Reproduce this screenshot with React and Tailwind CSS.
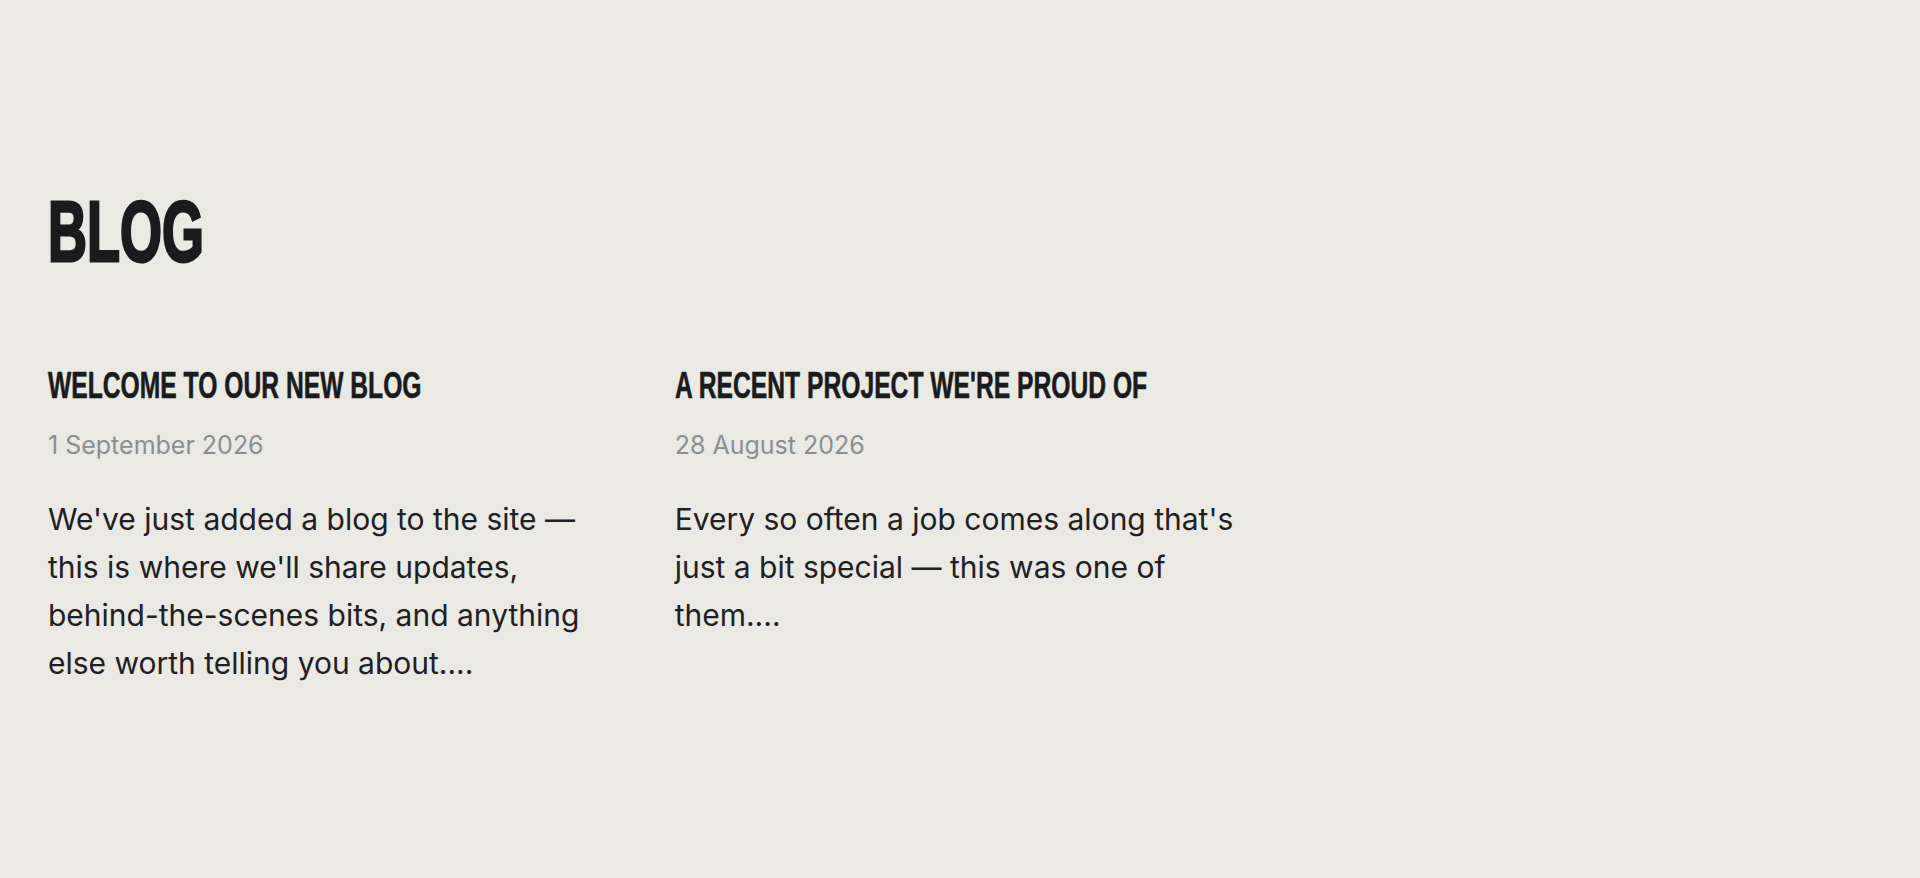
import React from 'react';

const posts = [
  {
    title: "Welcome to our new blog",
    date: '1 September 2026',
    excerpt:
      "We've just added a blog to the site — this is where we'll share updates, behind-the-scenes bits, and anything else worth telling you about....",
  },
  {
    title: "A recent project we're proud of",
    date: '28 August 2026',
    excerpt:
      "Every so often a job comes along that's just a bit special — this was one of them....",
  },
];

const display = "font-['Liberation_Sans_Narrow','Arial_Narrow',sans-serif] font-bold uppercase";

function PostCard({ post }) {
  return (
    <article className="flex flex-col">
      <h2 className={`${display} text-[36px] leading-none text-[#1a1b1d]`}>
        <span className="inline-block origin-left scale-x-[0.685] whitespace-nowrap [-webkit-text-stroke:0.6px_#1a1b1d]">
          {post.title}
        </span>
      </h2>
      <p className="mt-[23px] text-[25px] leading-[36px] text-[#8b8f94]">{post.date}</p>
      <p className="mt-[32px] text-[30px] leading-[48px] text-[#1f2023]">{post.excerpt}</p>
    </article>
  );
}

export default function App() {
  return (
    <div className="min-h-screen bg-[#eae9e4] font-['Inter','Liberation_Sans',sans-serif]">
      <section className="px-12 pt-[189px] pb-24">
        <h1 className={`${display} text-[85px] leading-none text-[#1a1b1d]`}>
          <span className="inline-block origin-left scale-x-[0.635] [-webkit-text-stroke:3px_#1a1b1d]">Blog</span>
        </h1>
        <div className="mt-[94px] grid grid-cols-3 gap-x-14">
          {posts.map((post) => (
            <PostCard key={post.date} post={post} />
          ))}
        </div>
      </section>
    </div>
  );
}
